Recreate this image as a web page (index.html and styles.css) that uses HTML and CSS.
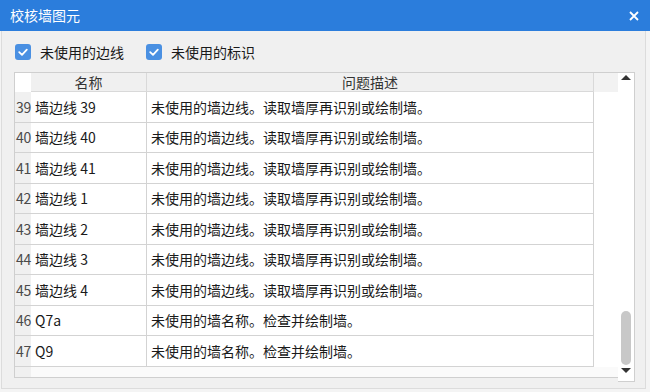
FILE: index.html
```html
<!DOCTYPE html>
<html lang="zh">
<head>
<meta charset="utf-8">
<link rel="stylesheet" href="styles.css">
</head>
<body>
<div class="window">
  <div class="titlebar">
    <span class="title">校核墙图元</span>
    <svg class="close" width="10" height="10" viewBox="0 0 10 10"><path d="M1 1 L9 9 M9 1 L1 9" stroke="#fff" stroke-width="1.8" fill="none"/></svg>
  </div>
  <div class="content">
    <div class="checks">
      <label class="check"><span class="box"><svg width="16" height="16" viewBox="0 0 16 16"><path d="M4.2 8.2 L7 10.8 L11.8 5.6" stroke="#fff" stroke-width="1.8" fill="none" stroke-linecap="round" stroke-linejoin="round"/></svg></span>未使用的边线</label>
      <label class="check"><span class="box"><svg width="16" height="16" viewBox="0 0 16 16"><path d="M4.2 8.2 L7 10.8 L11.8 5.6" stroke="#fff" stroke-width="1.8" fill="none" stroke-linecap="round" stroke-linejoin="round"/></svg></span>未使用的标识</label>
    </div>
    <div class="grid">
      <div class="main">
        <div class="row head">
          <div class="num"></div>
          <div class="name">名称</div>
          <div class="desc">问题描述</div>
          <div class="pad"></div>
        </div>
        <div class="row"><div class="num">39</div><div class="name">墙边线 39</div><div class="desc">未使用的墙边线。读取墙厚再识别或绘制墙。</div><div class="pad"></div></div>
        <div class="row"><div class="num">40</div><div class="name">墙边线 40</div><div class="desc">未使用的墙边线。读取墙厚再识别或绘制墙。</div><div class="pad"></div></div>
        <div class="row"><div class="num">41</div><div class="name">墙边线 41</div><div class="desc">未使用的墙边线。读取墙厚再识别或绘制墙。</div><div class="pad"></div></div>
        <div class="row"><div class="num">42</div><div class="name">墙边线 1</div><div class="desc">未使用的墙边线。读取墙厚再识别或绘制墙。</div><div class="pad"></div></div>
        <div class="row"><div class="num">43</div><div class="name">墙边线 2</div><div class="desc">未使用的墙边线。读取墙厚再识别或绘制墙。</div><div class="pad"></div></div>
        <div class="row"><div class="num">44</div><div class="name">墙边线 3</div><div class="desc">未使用的墙边线。读取墙厚再识别或绘制墙。</div><div class="pad"></div></div>
        <div class="row"><div class="num">45</div><div class="name">墙边线 4</div><div class="desc">未使用的墙边线。读取墙厚再识别或绘制墙。</div><div class="pad"></div></div>
        <div class="row"><div class="num">46</div><div class="name">Q7a</div><div class="desc">未使用的墙名称。检查并绘制墙。</div><div class="pad"></div></div>
        <div class="row"><div class="num">47</div><div class="name">Q9</div><div class="desc">未使用的墙名称。检查并绘制墙。</div><div class="pad"></div></div>
        <div class="row tail"><div class="num"></div><div class="rest"></div></div>
      </div>
      <div class="vscroll">
        <div class="arrow up"></div>
        <div class="track"><div class="thumb"></div></div>
        <div class="arrow down"></div>
      </div>
    </div>
  </div>
</div>
</body>
</html>
```

FILE: styles.css
```css
html, body {
  margin: 0;
  padding: 0;
  width: 650px;
  height: 392px;
  overflow: hidden;
  background: #f4f4f4;
  font-family: "Noto Sans CJK SC", "Noto Sans", sans-serif;
  font-size: 14px;
  color: #1a1a1a;
}
.window {
  width: 650px;
  height: 392px;
  display: flex;
  flex-direction: column;
}
.titlebar {
  height: 31px;
  background: #2b7ddc;
  display: flex;
  align-items: center;
  justify-content: space-between;
  padding: 0 11px 0 10px;
  box-sizing: border-box;
}
.title {
  color: #fff;
  font-size: 14px;
  line-height: 31px;
}
.close {
  display: block;
}
.content {
  margin: 0 4px 0 1px;
  height: 358px;
  box-sizing: border-box;
  border-left: 1px solid #dcdcdc;
  border-right: 1px solid #dcdcdc;
  border-bottom: 1px solid #dcdcdc;
  background: #f0f0f0;
  padding: 0 0 0 12px;
}
.checks {
  height: 41px;
  display: flex;
  align-items: center;
  gap: 22px;
  padding: 0 0 0 1px;
  box-sizing: border-box;
}
.check {
  display: flex;
  align-items: center;
  gap: 9px;
  line-height: 16px;
  color: #1a1a1a;
}
.box {
  width: 16px;
  height: 16px;
  border-radius: 3px;
  background: #4a90e2;
  display: block;
}
.box svg {
  display: block;
}
.grid {
  display: flex;
  width: 622px;
  align-items: flex-start;
}
.main {
  width: 603px;
  border: 1px solid #cfcfcf;
  border-right: none;
  background: #fff;
}
.row {
  display: flex;
  height: 30.5px;
}
.row > div {
  height: 100%;
  display: flex;
  align-items: center;
  box-sizing: border-box;
}
.row > .num,
.row > .name,
.row > .desc {
  border-bottom: 1px solid #d3d3d3;
}
.num {
  width: 16px;
  background: #f0f0f0;
  color: #4a4a4a;
  padding-left: 1px;
  letter-spacing: -0.3px;
}
.name {
  width: 116px;
  border-right: 1px solid #d3d3d3;
  padding-left: 4px;
  white-space: nowrap;
}
.desc {
  width: 447px;
  border-right: 1px solid #d3d3d3;
  padding-left: 4px;
  white-space: nowrap;
}
.pad {
  width: 24px;
}
.head {
  height: 19px;
  color: #333;
}
.head .num {
  background: #fff;
  border-bottom-color: #fff;
}
.head .name,
.head .desc {
  background: #f0f0f0;
  justify-content: center;
  padding-left: 0;
  border-right: 1px solid #d9d9d9;
  border-bottom: 1px solid #d9d9d9;
}
.head .pad {
  background: #f2f2f2;
}
.row.tail {
  height: 10.5px;
}
.row.tail > .num {
  border-bottom: none;
}
.tail .rest {
  flex: 1;
  background: #fafafa;
}
.vscroll {
  width: 17px;
  height: 310px;
  box-sizing: border-box;
  border: 1px solid #cfcfcf;
  border-left: none;
  background: #fff;
  display: flex;
  flex-direction: column;
  align-items: center;
}
.arrow {
  width: 0;
  height: 0;
  border-left: 5px solid transparent;
  border-right: 5px solid transparent;
  margin-left: -1px;
}
.arrow.up {
  border-bottom: 5px solid #333;
  margin-top: 2px;
}
.arrow.down {
  border-top: 5px solid #333;
  margin-bottom: 8px;
}
.track {
  flex: 1;
  display: flex;
  flex-direction: column;
  justify-content: flex-end;
  padding-bottom: 3px;
}
.thumb {
  width: 10px;
  height: 54px;
  border-radius: 5px;
  background: #c8c8c8;
  margin-left: -1px;
}
```
